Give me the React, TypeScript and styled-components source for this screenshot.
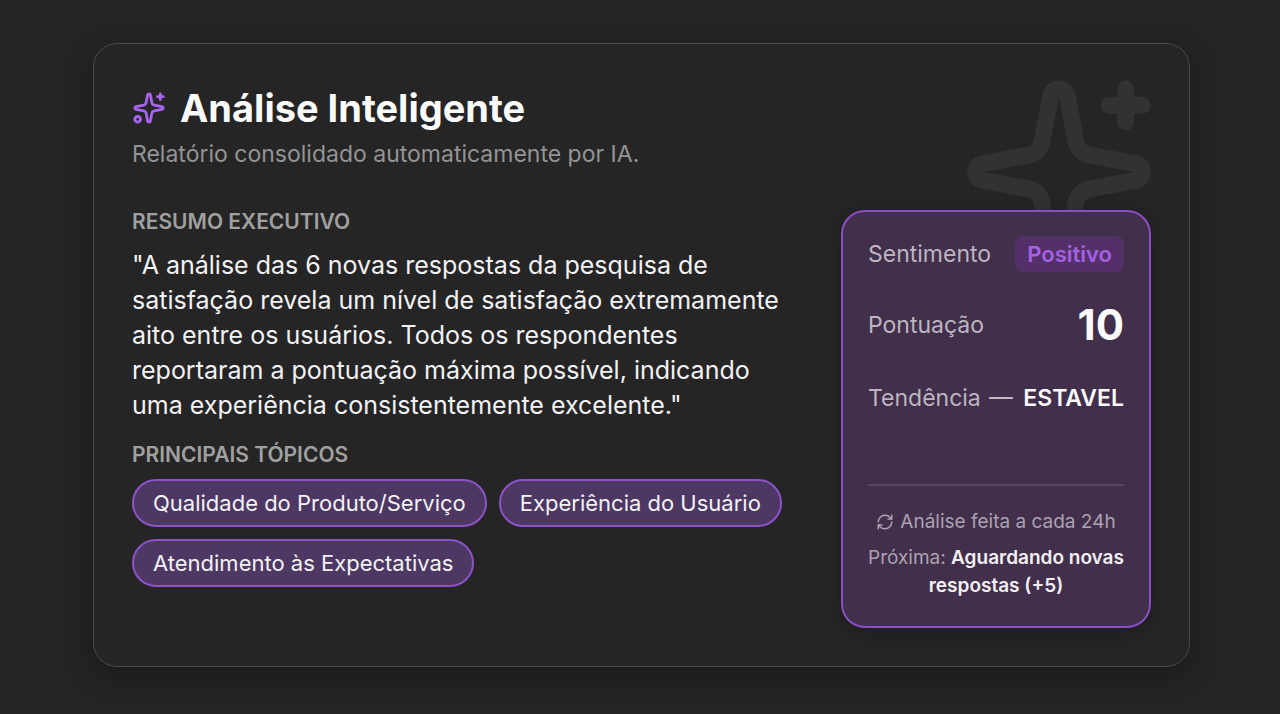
import React from "react";
import styled, { createGlobalStyle } from "styled-components";
import { RefreshCw, Sparkles } from "lucide-react";

const GlobalStyle = createGlobalStyle`
  *, *::before, *::after { box-sizing: border-box; }
  body {
    margin: 0;
    background: #242424;
    color: #f3f2f4;
    font-family: Inter, "Liberation Sans", sans-serif;
  }
  h1, h2, p, ul, dl, dd { margin: 0; padding: 0; }
`;

const Page = styled.main`
  display: flex;
  min-height: 100vh;
  padding: 43px 90px 47px 93px;
`;

const Card = styled.article`
  position: relative;
  display: flex;
  flex: 1;
  flex-direction: column;
  padding: 38px;
  border: 1px solid #4a4a4a;
  border-radius: 24px;
  background: #252525;
  box-shadow: 0 8px 28px rgba(0, 0, 0, 0.3);
`;

const Watermark = styled(Sparkles)`
  position: absolute;
  top: 28px;
  right: 30px;
  color: #ffffff;
  opacity: 0.06;
`;

const Title = styled.h1`
  display: flex;
  align-items: center;
  gap: 14px;
  font-size: 38px;
  font-weight: 700;
  line-height: 52px;
  color: #fafafa;

  svg { color: #a864ee; }
`;

const Subtitle = styled.p`
  font-size: 23px;
  line-height: 40px;
  color: #949494;
`;

const Body = styled.div`
  position: relative;
  display: grid;
  flex: 1;
  grid-template-columns: minmax(0, 1fr) 310px;
  gap: 48px;
  margin-top: 36px;
`;

const Heading = styled.h2`
  font-size: 21px;
  font-weight: 600;
  line-height: 24px;
  text-transform: uppercase;
  color: #a0a0a0;
`;

const Summary = styled.p`
  margin: 14px 0 20px;
  font-size: 25px;
  line-height: 35px;
`;

const Tags = styled.ul`
  display: flex;
  flex-wrap: wrap;
  gap: 12px;
  margin-top: 12px;
  list-style: none;
`;

const Tag = styled.li`
  padding: 0 19px;
  border: 2px solid #8d52c8;
  border-radius: 24px;
  background: #4d3763;
  font-size: 22px;
  line-height: 44px;
`;

const Panel = styled.aside`
  display: flex;
  flex-direction: column;
  padding: 24px 25px 26px;
  border: 2px solid #8a4ec6;
  border-radius: 24px;
  background: #412f4b;
  box-shadow: 0 4px 20px rgba(0, 0, 0, 0.25);
`;

const Metrics = styled.dl`
  display: grid;
  gap: 28px;
`;

const Metric = styled.div`
  display: flex;
  align-items: center;
  justify-content: space-between;
`;

const Label = styled.dt`
  font-size: 23px;
  line-height: 36px;
  color: #bdb6c1;
`;

const Badge = styled.dd`
  padding: 0 12px;
  border-radius: 8px;
  background: #543068;
  font-size: 22px;
  font-weight: 600;
  line-height: 36px;
  color: #a560e4;
`;

const Score = styled.dd`
  font-size: 42px;
  font-weight: 700;
  line-height: 50px;
  color: #fafafa;
`;

const Trend = styled.dd`
  display: flex;
  align-items: center;
  gap: 10px;
  font-size: 23px;
  font-weight: 600;
  line-height: 40px;
  color: #fafafa;
`;

const Dash = styled.span`
  width: 24px;
  height: 2px;
  background: #c5b5c6;
`;

const PanelFooter = styled.footer`
  display: grid;
  gap: 8px;
  margin-top: auto;
  padding-top: 22px;
  border-top: 2px solid #57456a;
  font-size: 19px;
  line-height: 28px;
  text-align: center;
  color: #aca2b1;

  strong { font-weight: 600; color: #f3f0f4; }
`;

const Frequency = styled.p`
  display: flex;
  align-items: center;
  justify-content: center;
  gap: 6px;
`;

const topics = [
  "Qualidade do Produto/Serviço",
  "Experiência do Usuário",
  "Atendimento às Expectativas",
];

export default function App() {
  return (
    <Page>
      <GlobalStyle />
      <Card>
        <Watermark size={200} strokeWidth={2} aria-hidden="true" />
        <header>
          <Title>
            <Sparkles size={34} strokeWidth={2} aria-hidden="true" />
            Análise Inteligente
          </Title>
          <Subtitle>Relatório consolidado automaticamente por IA.</Subtitle>
        </header>
        <Body>
          <section>
            <Heading>Resumo executivo</Heading>
            <Summary>
              "A análise das 6 novas respostas da pesquisa de satisfação revela
              um nível de satisfação extremamente aito entre os usuários. Todos
              os respondentes reportaram a pontuação máxima possível, indicando
              uma experiência consistentemente excelente."
            </Summary>
            <Heading>Principais tópicos</Heading>
            <Tags>
              {topics.map((topic) => (
                <Tag key={topic}>{topic}</Tag>
              ))}
            </Tags>
          </section>
          <Panel>
            <Metrics>
              <Metric>
                <Label>Sentimento</Label>
                <Badge>Positivo</Badge>
              </Metric>
              <Metric>
                <Label>Pontuação</Label>
                <Score>10</Score>
              </Metric>
              <Metric>
                <Label>Tendência</Label>
                <Trend>
                  <Dash />
                  ESTAVEL
                </Trend>
              </Metric>
            </Metrics>
            <PanelFooter>
              <Frequency>
                <RefreshCw size={18} strokeWidth={2} aria-hidden="true" />
                Análise feita a cada 24h
              </Frequency>
              <p>
                Próxima: <strong>Aguardando novas respostas (+5)</strong>
              </p>
            </PanelFooter>
          </Panel>
        </Body>
      </Card>
    </Page>
  );
}
